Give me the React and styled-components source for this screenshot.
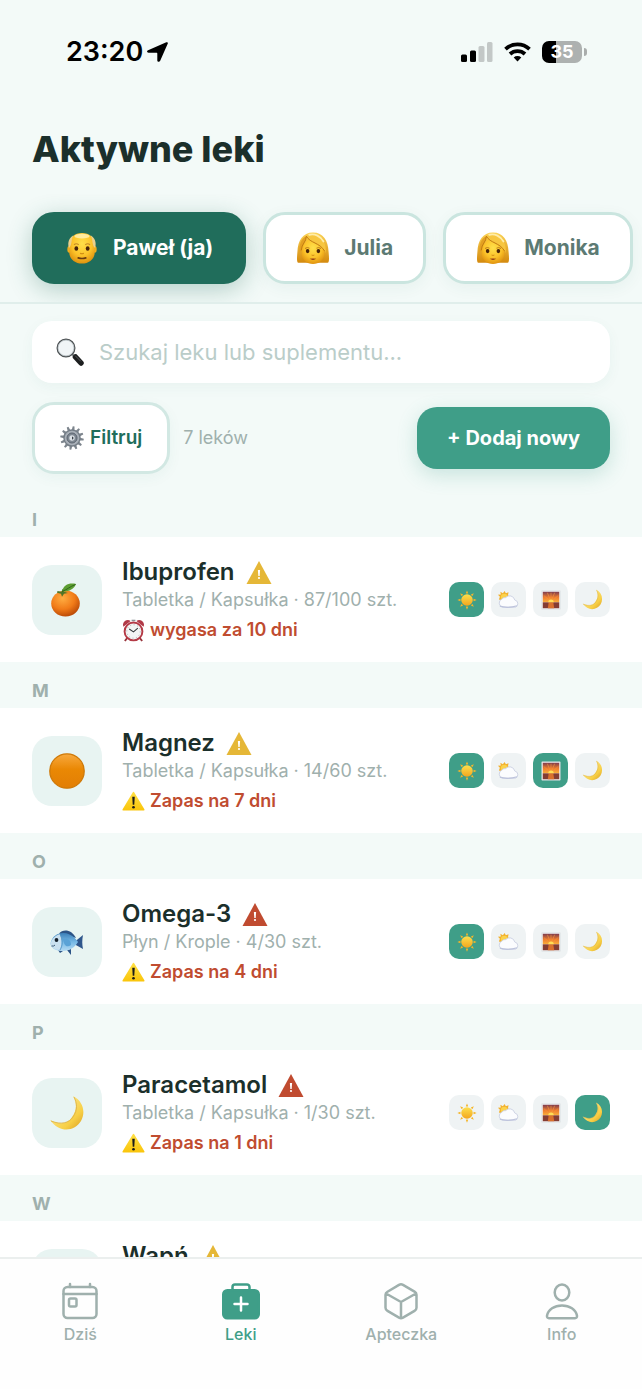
import React from 'react';
import styled, { createGlobalStyle } from 'styled-components';

const color = {
  page: '#f3faf8',
  ink: '#1b2f2b',
  muted: '#9fb0ad',
  deep: '#206d5b',
  accent: '#3f9e88',
  line: '#e0eeeb',
  danger: '#c04c30',
  amber: '#e5b737',
  red: '#c04b30',
};

const GlobalStyle = createGlobalStyle`
  *, *::before, *::after { box-sizing: border-box; }
  body { margin: 0; background: ${color.page}; }
  body, button, input { font-family: Inter, "Liberation Sans", sans-serif; }
  button { cursor: pointer; }
`;

/* ---------- Emoji drawings ---------- */

const Art = styled.svg`
  display: block;
  flex: none;
  width: ${(p) => p.$size}px;
  height: ${(p) => p.$size}px;
`;

const Face = () => (
  <radialGradient id="face" cx="50%" cy="35%" r="65%">
    <stop offset="0" stopColor="#ffe04a" />
    <stop offset="0.6" stopColor="#fcc32a" />
    <stop offset="1" stopColor="#e0930f" />
  </radialGradient>
);

const Man = ({ size }) => (
  <Art $size={size} viewBox="0 0 36 36" aria-hidden="true">
    <defs><Face /></defs>
    <ellipse cx="4.500" cy="19.500" rx="2" ry="3.500" fill="#f0ac1c" />
    <ellipse cx="31.500" cy="19.500" rx="2" ry="3.500" fill="#f0ac1c" />
    <path d="M4.500 17C4 7 10 2 18 2s14 5 13.500 15v5.500C31.500 29.500 25.500 34.500 18 34.500S4.500 29.500 4.500 22.500z" fill="url(#face)" />
    <path d="M4 17.500C2.500 12 4.500 7 9 4.500c-2.500 4-1.500 9-4 13zM32 17.500c1.500-5.500-.5-10.500-5-13 2.500 4 1.500 9 4 13z" fill="#ecd08c" />
    <ellipse cx="18" cy="5.500" rx="8" ry="2.500" fill="#fff3b8" opacity=".8" />
    <path d="M9.500 14.500q2.500-2 5 0M21.500 14.500q2.500-2 5 0" stroke="#c48a26" strokeWidth="1.200" fill="none" />
    <ellipse cx="12" cy="18.500" rx="2" ry="2.300" fill="#472309" />
    <ellipse cx="24" cy="18.500" rx="2" ry="2.300" fill="#472309" />
    <path d="M16 23.500q2 1 4 0" stroke="#cf8a12" strokeWidth="1.100" fill="none" />
    <path d="M14 28.500q4 1.200 8 0" stroke="#6b3c10" strokeWidth="1.800" strokeLinecap="round" fill="none" />
  </Art>
);

const Woman = ({ size }) => (
  <Art $size={size} viewBox="0 0 36 36" aria-hidden="true">
    <defs>
      <Face />
      <linearGradient id="hair" x1="0" y1="0" x2="0" y2="1">
        <stop offset="0" stopColor="#fbd355" />
        <stop offset="1" stopColor="#d48a0e" />
      </linearGradient>
    </defs>
    <path d="M2.500 33.500C.5 33.500 1 28 1.500 22 2 10 7 1.500 18 1.500S34 10 34.500 22c.5 6 1 11.500-1 11.500z" fill="url(#hair)" />
    <path d="M6 20c.5-5 4-7 6.500-11.500C17 13 25 14 30 20v4c0 6.500-5.500 11-12 11S6 30.500 6 24z" fill="url(#face)" />
    <path d="M11 5.500c0 6-5 8-5.500 16L4 24C3 15 5 8 11 5.500z" fill="#e3a022" />
    <path d="M11 5.500c4 7.500 14 6.500 19.500 16l1 1.500c1-8-3-18-13-19.500-3-.4-6 .5-7.500 2z" fill="#f7c63f" />
    <path d="M11 5.500c4 7.500 14 6.500 19.500 16M11 5.500c0 6-5 8-5.500 15" stroke="#bf780d" strokeWidth="1" fill="none" />
    <path d="M14 4c6-1.500 12 1.500 15 7" stroke="#ffedaa" strokeWidth="2" fill="none" strokeLinecap="round" />
    <path d="M9.500 18.500q2.500-1.800 4.800-.3M21.700 18.200q2.300-1.500 4.800.3" stroke="#b5741a" strokeWidth="1" fill="none" />
    <ellipse cx="12.300" cy="21.300" rx="1.900" ry="2.200" fill="#472309" />
    <ellipse cx="23.700" cy="21.300" rx="1.900" ry="2.200" fill="#472309" />
    <path d="M16.500 25.500q1.500.8 3 0" stroke="#cf8a12" strokeWidth="1" fill="none" />
    <path d="M14.500 29.500q3.500-1 7 0-3.500 2.300-7 0z" fill="#8d3513" />
  </Art>
);

const Magnifier = ({ size }) => (
  <Art $size={size} viewBox="0 0 28 28" aria-hidden="true">
    <path d="M15.500 15.500l5 4.500" stroke="#8a9092" strokeWidth="2.500" />
    <path d="M19.500 19l5.500 6" stroke="#1c1e1f" strokeWidth="5.500" strokeLinecap="round" />
    <path d="M19.500 18l5 5" stroke="#5a5e60" strokeWidth="1" strokeLinecap="round" />
    <circle cx="10" cy="10" r="8.800" fill="#f1f5f7" stroke="#4d5254" strokeWidth="1.400" />
    <circle cx="10" cy="10" r="7.900" fill="none" stroke="#b9c1c5" strokeWidth=".8" />
  </Art>
);

const Gear = ({ size }) => (
  <Art $size={size} viewBox="0 0 24 24" aria-hidden="true">
    {Array.from({ length: 12 }, (_, i) => (
      <path key={i} d="M10.600 4l.5-3.800h1.800l.5 3.800z" fill="#7d858d" transform={`rotate(${i * 30 + 8} 12 12)`} />
    ))}
    <circle cx="12" cy="12" r="8" fill="#a9b0b8" stroke="#747d86" strokeWidth="1.400" />
    <circle cx="12" cy="12" r="5" fill="#7f8892" stroke="#5c6570" strokeWidth="1" />
    <circle cx="12" cy="12" r="2.700" fill="#dce1e5" />
    <path d="M12 10.500a1.500 1.500 0 0 1 0 3z" fill="#3a424a" />
  </Art>
);

const Tangerine = ({ size }) => (
  <Art $size={size} viewBox="0 0 36 36" aria-hidden="true">
    <defs>
      <radialGradient id="peel" cx="40%" cy="30%" r="70%">
        <stop offset="0" stopColor="#ffad42" />
        <stop offset="0.6" stopColor="#f17b18" />
        <stop offset="1" stopColor="#bd4c08" />
      </radialGradient>
    </defs>
    <ellipse cx="16.500" cy="21.500" rx="14.300" ry="13" fill="url(#peel)" />
    <path d="M8.500 9l4 .8 1-3 1.500 3 4 1.200-4 .8-2 3-1-3-4-1z" fill="#507527" />
    <path d="M13 9.500C14.500 3 20 .5 27 2c-2 5-7.500 8-14 7.500z" fill="#5c9d31" />
    <path d="M13 9.500C17.500 8 21 4.500 26.500 2.500" stroke="#2f651c" strokeWidth="1" fill="none" />
  </Art>
);

const OrangeBall = ({ size }) => (
  <Art $size={size} viewBox="0 0 36 36" aria-hidden="true">
    <defs>
      <linearGradient id="ball" x1="0" y1="0" x2="0" y2="1">
        <stop offset="0" stopColor="#f8a93f" />
        <stop offset="0.45" stopColor="#ea8804" />
        <stop offset="1" stopColor="#e27e05" />
      </linearGradient>
    </defs>
    <circle cx="18" cy="18" r="17.200" fill="url(#ball)" stroke="#cf7a0a" strokeWidth="1.300" />
  </Art>
);

const Fish = ({ size }) => (
  <Art $size={size} viewBox="0 0 36 36" aria-hidden="true">
    <defs>
      <linearGradient id="fish" x1="0" y1="0" x2="0" y2="1">
        <stop offset="0" stopColor="#3b7fb8" />
        <stop offset="0.5" stopColor="#76b9e6" />
        <stop offset="1" stopColor="#b4daf2" />
      </linearGradient>
    </defs>
    <path d="M10 9.500C14 4.500 23 5.500 27 14zM18 26l4 5v-6zM9 26l2 3 3-2z" fill="#2c5487" />
    <path d="M26 17.500l8-6.500c-1 5-1 9.500 0 14l-8-4.500z" fill="#2f568c" />
    <path d="M1.500 19.500C3 12 9 8.500 15 9c6.500.5 11 4.500 14 9-3.500 5.500-8 9-15 9C6 27 2 24 1.500 19.500z" fill="url(#fish)" />
    <path d="M1.500 19.500c1-4 4-7.500 9-9.500 2.500 4 2.500 10 .5 16-6 0-9.500-3.500-9.500-6.500z" fill="#c9e0f0" />
    <path d="M14 15c5.500-1 8 1.500 8 6-4 3-7 1-8-6z" fill="#5aa2d6" />
    <path d="M11 10.500c3 5 3 10.500 0 15.500" stroke="#5a9ac9" strokeWidth="1" fill="none" />
    <circle cx="7.500" cy="16" r="1.900" fill="#14202d" />
    <path d="M2.500 22q2.500.5 3.500-1" stroke="#3c5b78" strokeWidth="1" fill="none" />
  </Art>
);

const Moon = ({ size }) => (
  <Art $size={size} viewBox="0 0 36 36" aria-hidden="true">
    <defs>
      <linearGradient id="moon" x1="0" y1="0" x2="1" y2="1">
        <stop offset="0.3" stopColor="#fbe27e" />
        <stop offset="0.7" stopColor="#f7cf45" />
        <stop offset="1" stopColor="#d99c22" />
      </linearGradient>
    </defs>
    <path d="M24 1c10 5 13 16 8 25-6 10-21 13-31-1 10 5 18 4 22-3 5-7 5-14 1-21z" fill="url(#moon)" />
    <path d="M2 26c10 4 18 2 22-4 5-7 4-14 1-20" stroke="#dab04a" strokeWidth=".8" fill="none" />
  </Art>
);

const Sun = ({ size }) => (
  <Art $size={size} viewBox="0 0 24 24" aria-hidden="true">
    <defs>
      <linearGradient id="sun" x1="0" y1="0" x2="0" y2="1">
        <stop offset="0" stopColor="#fde04d" />
        <stop offset="1" stopColor="#f3a51e" />
      </linearGradient>
    </defs>
    {Array.from({ length: 8 }, (_, i) => (
      <path key={i} d="M10.700 4.700L12 1.500l1.300 3.200q-1.300.6-2.600 0z" fill="#f4b529" transform={`rotate(${i * 45} 12 12)`} />
    ))}
    <circle cx="12" cy="12" r="6.300" fill="url(#sun)" />
  </Art>
);

const Cloud = ({ size }) => (
  <Art $size={size} viewBox="0 0 24 24" aria-hidden="true">
    <path d="M3 9L1 7l3-.3L3.500 4l2.600 1.600L8 3l1.200 2.600L12 4.500l-.5 3L13 9 6 13l-4-1z" fill="#f2b02c" />
    <circle cx="7.500" cy="9.500" r="3.500" fill="#fbd24c" />
    <path d="M5.500 20a4.500 4.500 0 0 1-.3-8.500A4 4 0 0 1 9 10a5.500 5.500 0 0 1 9.500 2.500A4 4 0 0 1 19.500 20z" fill="#fbfcfe" stroke="#cdd2e3" strokeWidth="1" />
    <path d="M3 19q8 2.500 18-.5" stroke="#bdc3dc" strokeWidth="1.300" fill="none" />
  </Art>
);

const Sunset = ({ size }) => (
  <Art $size={size} viewBox="0 0 24 24" aria-hidden="true">
    <defs>
      <linearGradient id="sky" x1="0" y1="0" x2="0" y2="1">
        <stop offset="0" stopColor="#7c3c50" />
        <stop offset="0.55" stopColor="#ef7c2e" />
        <stop offset="1" stopColor="#f9b03c" />
      </linearGradient>
    </defs>
    <path d="M2 2h20v20H2z" fill="#fafafa" stroke="#d4d8dc" strokeWidth=".7" />
    <path d="M3 3h18v11.500H3z" fill="url(#sky)" />
    <path d="M12 14L4 7M12 14L8 4M12 14V4M12 14l4-10M12 14l8-7" stroke="#f79a3b" strokeWidth=".9" opacity=".7" />
    <path d="M3 14.500h18V21H3z" fill="#853d33" />
    <path d="M9.500 14.500h5l1 6.500h-7z" fill="#d9702d" />
    <path d="M9 14.500a3 3 0 0 1 6 0z" fill="#ffdf58" />
  </Art>
);

const Alarm = ({ size }) => (
  <Art $size={size} viewBox="0 0 24 24" aria-hidden="true">
    <path d="M6 19l-3 4M18 19l3 4" stroke="#97343c" strokeWidth="2" />
    <path d="M1.500 8A5 5 0 0 1 9 2zM22.500 8A5 5 0 0 0 15 2z" fill="#b13a48" />
    <path d="M10 1.500h4" stroke="#8b9297" strokeWidth="1.500" />
    <circle cx="12" cy="13" r="9.300" fill="#f3f5f5" stroke="#b43a46" strokeWidth="2" />
    <circle cx="12" cy="13" r="7" fill="none" stroke="#a2a8aa" strokeWidth="1" strokeDasharray="1 2.660" />
    <path d="M7.500 10.500L12 13.500l4.500-4" stroke="#34393b" strokeWidth="1.100" fill="none" />
  </Art>
);

const Caution = ({ size }) => (
  <Art $size={size} viewBox="0 0 24 24" aria-hidden="true">
    <defs>
      <linearGradient id="caution" x1="0" y1="0" x2="0" y2="1">
        <stop offset="0" stopColor="#ffdf42" />
        <stop offset="1" stopColor="#fac60d" />
      </linearGradient>
    </defs>
    <path d="M12 3l10.500 17.500h-21z" fill="url(#caution)" stroke="url(#caution)" strokeWidth="2" strokeLinejoin="round" />
    <path d="M10.700 7h2.600l-.5 8.500h-1.600z" fill="#1c1c1a" />
    <circle cx="12" cy="18" r="1.400" fill="#1c1c1a" />
  </Art>
);

const Flag = styled.svg`
  display: block;
  flex: none;
  width: 26px;
  height: 24px;
`;

const StockFlag = ({ level }) => (
  <Flag viewBox="0 0 26 24" aria-hidden="true">
    <path d="M13 1l12.500 23H.5z" fill={level === 'low' ? color.red : color.amber} />
    <path d="M11.900 10h2.200l-.4 6h-1.400z" fill="#fff" />
    <circle cx="13" cy="18" r="1.100" fill="#fff" />
  </Flag>
);

/* ---------- Status bar ---------- */

const StatusBar = styled.div`
  display: flex;
  align-items: center;
  justify-content: space-between;
  height: 104px;
  padding: 0 55px 0 66px;
  color: #000;
`;

const Clock = styled.div`
  display: flex;
  align-items: center;
  gap: 4px;
  font-size: 27px;
  font-weight: 600;
  line-height: 32px;
`;

const Signals = styled.div`
  display: flex;
  align-items: center;
  gap: 11px;
`;

const Battery = styled.div`
  display: flex;
  align-items: center;
  gap: 2px;

  &::after {
    content: '';
    width: 3px;
    height: 8px;
    border-radius: 0 3px 3px 0;
    background: #a9adac;
  }
`;

const BatteryLevel = styled.span`
  width: 40px;
  border-radius: 7px;
  background: linear-gradient(90deg, #000 35%, #adb1b0 35%);
  color: #fff;
  font-size: 18px;
  font-weight: 700;
  line-height: 22px;
  text-align: center;
`;

/* ---------- Page ---------- */

const Screen = styled.div`
  display: flex;
  flex-direction: column;
  height: 100vh;
  background: ${color.page};
  color: ${color.ink};
`;

const Header = styled.header`
  flex: none;
  border-bottom: 2px solid ${color.line};
`;

const Title = styled.h1`
  margin: 0;
  padding: 23px 32px;
  font-size: 36px;
  font-weight: 800;
  line-height: 44px;
`;

const People = styled.div`
  display: flex;
  gap: 17px;
  padding: 18px 32px;
  overflow-x: auto;
  scrollbar-width: none;
`;

const Person = styled.button`
  display: flex;
  flex: none;
  align-items: center;
  gap: 14px;
  height: 72px;
  padding: 0 30px;
  border: 3px solid ${(p) => (p.$active ? color.deep : '#cae5df')};
  border-radius: 22px;
  background: ${(p) => (p.$active ? color.deep : '#fff')};
  box-shadow: ${(p) => (p.$active ? '0 6px 24px rgba(32, 109, 91, 0.3)' : '0 4px 16px rgba(32, 109, 91, 0.06)')};
  color: ${(p) => (p.$active ? '#fff' : '#5c7a73')};
  font-size: 21px;
  font-weight: 700;
  line-height: 28px;
`;

const Content = styled.main`
  flex: 1;
  min-height: 0;
  overflow-y: auto;
  scrollbar-width: none;
`;

const Search = styled.label`
  display: flex;
  align-items: center;
  gap: 15px;
  height: 62px;
  margin: 17px 32px 19px;
  padding: 0 24px;
  border-radius: 20px;
  background: #fff;
  box-shadow: 0 4px 14px rgba(32, 109, 91, 0.05);
`;

const SearchInput = styled.input`
  flex: 1;
  min-width: 0;
  padding: 0;
  border: 0;
  outline: 0;
  background: none;
  color: ${color.ink};
  font-size: 22px;
  line-height: 30px;

  &::placeholder { color: #bacdc9; opacity: 1; }
`;

const Toolbar = styled.div`
  display: flex;
  align-items: center;
  gap: 13px;
  padding: 0 32px;
`;

const FilterButton = styled.button`
  display: flex;
  align-items: center;
  gap: 6px;
  height: 72px;
  padding: 0 25px;
  border: 3px solid #d2e8e3;
  border-radius: 22px;
  background: #fff;
  box-shadow: 0 4px 14px rgba(32, 109, 91, 0.05);
  color: ${color.deep};
  font-size: 19px;
  font-weight: 600;
  line-height: 26px;
`;

const Count = styled.span`
  flex: 1;
  color: ${color.muted};
  font-size: 18px;
  line-height: 26px;
`;

const AddButton = styled.button`
  height: 62px;
  padding: 0 30px;
  border: 0;
  border-radius: 20px;
  background: ${color.accent};
  box-shadow: 0 6px 20px rgba(63, 158, 136, 0.24);
  color: #fff;
  font-size: 20px;
  font-weight: 700;
  line-height: 26px;
`;

const List = styled.div`
  padding-top: 17px;
`;

const Letter = styled.h2`
  margin: 0;
  padding: 20px 32px 8px;
  color: ${color.muted};
  font-size: 18px;
  font-weight: 700;
  line-height: 18px;
`;

const Medicine = styled.article`
  display: flex;
  align-items: center;
  gap: 20px;
  padding: 19px 32px;
  background: #fff;
`;

const Tile = styled.div`
  display: flex;
  flex: none;
  align-items: center;
  justify-content: center;
  width: 70px;
  height: 70px;
  border-radius: 20px;
  background: #e8f4f2;
`;

const Info = styled.div`
  flex: 1;
  min-width: 0;
  min-height: 87px;
`;

const NameLine = styled.div`
  display: flex;
  align-items: center;
  gap: 11px;
`;

const Name = styled.h3`
  margin: 0;
  font-size: 24px;
  font-weight: 600;
  line-height: 31px;
`;

const Stock = styled.p`
  margin: 0;
  color: ${color.muted};
  font-size: 18px;
  line-height: 26px;
  white-space: nowrap;
`;

const Alert = styled.p`
  display: flex;
  align-items: center;
  gap: 5px;
  margin: 4px 0 0;
  color: ${color.danger};
  font-size: 18px;
  font-weight: 600;
  line-height: 26px;
`;

const Doses = styled.div`
  display: flex;
  flex: none;
  gap: 7px;
`;

const Dose = styled.button`
  display: flex;
  align-items: center;
  justify-content: center;
  width: 35px;
  height: 35px;
  padding: 0;
  border: 0;
  border-radius: 10px;
  background: ${(p) => (p.$active ? color.accent : '#eff3f4')};
`;

const TabBar = styled.nav`
  display: flex;
  flex: none;
  height: 132px;
  padding-top: 23px;
  border-top: 2px solid #ebefee;
  background: #fefefe;
`;

const Tab = styled.a`
  display: flex;
  flex: 1;
  flex-direction: column;
  align-items: center;
  gap: 3px;
  color: ${(p) => (p.$active ? color.accent : color.muted)};
  font-size: 16px;
  font-weight: 500;
  line-height: 22px;
  text-decoration: none;
`;

const TabIcon = styled.svg`
  width: 40px;
  height: 38px;
  fill: none;
  stroke: currentColor;
  stroke-width: 2.500;
  stroke-linecap: round;
  stroke-linejoin: round;
`;

/* ---------- Data ---------- */

const people = [
  { name: 'Paweł (ja)', Icon: Man, active: true },
  { name: 'Julia', Icon: Woman },
  { name: 'Monika', Icon: Woman },
];

const times = [
  { id: 'morning', Icon: Sun, size: 22 },
  { id: 'noon', Icon: Cloud, size: 23 },
  { id: 'evening', Icon: Sunset, size: 22 },
  { id: 'night', Icon: Moon, size: 21 },
];

const medicines = [
  { letter: 'I', name: 'Ibuprofen', level: 'mid', stock: 'Tabletka / Kapsułka · 87/100 szt.', alert: 'wygasa za 10 dni', AlertIcon: Alarm, Icon: Tangerine, doses: ['morning'] },
  { letter: 'M', name: 'Magnez', level: 'mid', stock: 'Tabletka / Kapsułka · 14/60 szt.', alert: 'Zapas na 7 dni', AlertIcon: Caution, Icon: OrangeBall, doses: ['morning', 'evening'] },
  { letter: 'O', name: 'Omega-3', level: 'low', stock: 'Płyn / Krople · 4/30 szt.', alert: 'Zapas na 4 dni', AlertIcon: Caution, Icon: Fish, doses: ['morning'] },
  { letter: 'P', name: 'Paracetamol', level: 'low', stock: 'Tabletka / Kapsułka · 1/30 szt.', alert: 'Zapas na 1 dni', AlertIcon: Caution, Icon: Moon, doses: ['night'] },
  { letter: 'W', name: 'Wapń', level: 'mid', Icon: OrangeBall, doses: ['morning'] },
];

const tabs = [
  {
    label: 'Dziś',
    icon: (
      <>
        <rect x="3.500" y="5" width="33" height="31" rx="4" />
        <path d="M3.500 12h33M10 2v3M30 2v3" />
        <rect x="9" y="16.500" width="7.500" height="8" rx="1.500" />
      </>
    ),
  },
  {
    label: 'Leki',
    active: true,
    icon: (
      <>
        <path d="M11.500 8V5A2.500 2.500 0 0 1 14 2.500h12A2.500 2.500 0 0 1 28.500 5v3" />
        <rect x="2.250" y="8.250" width="35.500" height="28" rx="4" fill="currentColor" />
        <path d="M20 15.500v13M13.500 22h13" stroke="#fff" />
      </>
    ),
  },
  {
    label: 'Apteczka',
    icon: (
      <path d="M18 2.900q2-1.100 4 0l11.500 6.800q2 1.200 2 3v13q0 2-2 3.200L22 35.600q-2 1.100-4 0L6.500 28.900q-2-1.200-2-3.200v-13q0-1.800 2-3zM5 11.500l15 8.500 15-8.500M20 20v16" />
    ),
  },
  {
    label: 'Info',
    icon: (
      <>
        <ellipse cx="20" cy="10.500" rx="7.300" ry="8" />
        <path d="M20 23.500c7.500 0 14 4 15 10.300.2 1.400-.6 2.400-2 2.400H7c-1.400 0-2.200-1-2-2.400 1-6.300 7.500-10.300 15-10.300z" />
      </>
    ),
  },
];

export default function App() {
  return (
    <Screen>
      <GlobalStyle />
      <Header>
        <StatusBar>
          <Clock>
            23:20
            <svg width="21" height="20" viewBox="0 0 21 20" aria-hidden="true">
              <path d="M19.300.3c1.100-.5 1.900.3 1.500 1.300l-7.600 17.200c-.7 1.600-2.900 1.300-2.900-.4v-7c0-.4-.2-.6-.6-.6H1.600C-.2 10.700-.5 9 1.100 8.300z" fill="#000" />
            </svg>
          </Clock>
          <Signals>
            <svg width="32" height="20" viewBox="0 0 32 20" aria-hidden="true">
              <rect y="12.500" width="6" height="7.500" rx="1.500" />
              <rect x="9" y="8.500" width="6" height="11.500" rx="1.500" />
              <rect x="17.500" y="4" width="6" height="16" rx="1.500" fill="#c3c8c7" />
              <rect x="26" width="5.500" height="20" rx="1.500" fill="#c3c8c7" />
            </svg>
            <svg width="27" height="20" viewBox="0 0 27 20" fill="none" stroke="#000" strokeWidth="3.800" aria-hidden="true">
              <path d="M1.500 7.200a17.500 17.500 0 0 1 24 0" />
              <path d="M6 12a11 11 0 0 1 15 0" />
              <path d="M13.500 19.500l-3.800-4a5.600 5.600 0 0 1 7.600 0z" fill="#000" stroke="none" />
            </svg>
            <Battery><BatteryLevel>35</BatteryLevel></Battery>
          </Signals>
        </StatusBar>
        <Title>Aktywne leki</Title>
        <People>
          {people.map(({ name, Icon, active }) => (
            <Person key={name} type="button" $active={active} aria-pressed={!!active}>
              <Icon size={34} />
              {name}
            </Person>
          ))}
        </People>
      </Header>

      <Content>
        <Search>
          <Magnifier size={28} />
          <SearchInput type="search" placeholder="Szukaj leku lub suplementu..." />
        </Search>
        <Toolbar>
          <FilterButton type="button">
            <Gear size={24} />
            Filtruj
          </FilterButton>
          <Count>7 leków</Count>
          <AddButton type="button">+ Dodaj nowy</AddButton>
        </Toolbar>
        <List>
          {medicines.map(({ letter, name, level, stock, alert, AlertIcon, Icon, doses }) => (
            <section key={name}>
              <Letter>{letter}</Letter>
              <Medicine>
                <Tile><Icon size={36} /></Tile>
                <Info>
                  <NameLine>
                    <Name>{name}</Name>
                    <StockFlag level={level} />
                  </NameLine>
                  {stock && <Stock>{stock}</Stock>}
                  {alert && (
                    <Alert>
                      <AlertIcon size={23} />
                      {alert}
                    </Alert>
                  )}
                </Info>
                <Doses>
                  {times.map((time) => (
                    <Dose key={time.id} type="button" $active={doses.includes(time.id)} aria-pressed={doses.includes(time.id)}>
                      <time.Icon size={time.size} />
                    </Dose>
                  ))}
                </Doses>
              </Medicine>
            </section>
          ))}
        </List>
      </Content>

      <TabBar>
        {tabs.map(({ label, icon, active }) => (
          <Tab key={label} href="#" $active={active}>
            <TabIcon viewBox="0 0 40 38" aria-hidden="true">{icon}</TabIcon>
            {label}
          </Tab>
        ))}
      </TabBar>
    </Screen>
  );
}
